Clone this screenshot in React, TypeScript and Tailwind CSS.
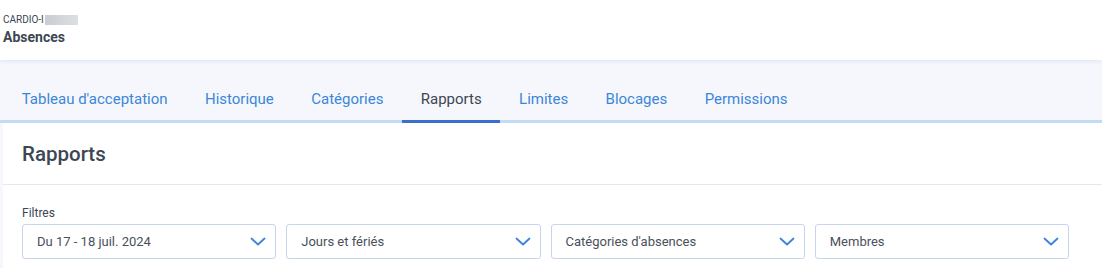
import React from 'react';

const tabs = [
    "Tableau d'acceptation",
    'Historique',
    'Catégories',
    'Rapports',
    'Limites',
    'Blocages',
    'Permissions',
];

const filters = ['Du 17 - 18 juil. 2024', 'Jours et fériés', "Catégories d'absences", 'Membres'];

const Chevron: React.FC = () => (
    <svg width="16" height="9" viewBox="0 0 16 9" fill="none" stroke="#3b82e0" strokeWidth="1.8" strokeLinecap="round" strokeLinejoin="round">
        <path d="M1.5 1.5L8 7.5L14.5 1.5" />
    </svg>
);

const App: React.FC = () => {
    return (
        <div className="w-[1102px] h-[268px] overflow-hidden bg-[#f5f7fc] font-['Roboto',sans-serif]">
            <header className="h-[60px] bg-white px-[3px] pt-[13px] relative z-10 shadow-[0_1px_4px_rgba(180,190,230,0.35)]">
                <div className="flex items-center text-[10px] leading-[13px] text-[#3d4653]">
                    CARDIO-I
                    <span className="ml-[1px] inline-block w-[33px] h-[10px] bg-gradient-to-r from-[#c9ccd2] to-[#dcdfe3]" />
                </div>
                <h1 className="text-[14px] leading-[18px] font-bold text-[#3d4653] mt-[2px]">Absences</h1>
            </header>

            <nav className="h-[63px] pl-[3px] flex items-end border-b-[3px] border-[#c3dcf3]">
                {tabs.map((t) => (
                    <div
                        key={t}
                        className={
                            t === 'Rapports'
                                ? 'px-[18.7px] pb-[11px] text-[15px] leading-[20px] text-[#3d4653] -mb-[3px] border-b-[3px] border-[#3a6fcf]'
                                : 'px-[18.7px] pb-[11px] text-[15px] leading-[20px] text-[#3c86d8]'
                        }
                    >
                        {t}
                    </div>
                ))}
            </nav>

            <main className="ml-[3px] bg-white h-full">
                <div className="h-[62px] flex items-center px-[19px] border-b border-[#dfe8f3]">
                    <h2 className="text-[20.5px] font-medium text-[#3d4653] pt-[2px]">Rapports</h2>
                </div>
                <div className="px-[19px] pt-[20px]">
                    <div className="text-[12px] leading-[16px] text-[#3d4653]">Filtres</div>
                    <div className="mt-[3px] flex gap-[10px]">
                        {filters.map((f) => (
                            <div
                                key={f}
                                className="w-[254.25px] h-[35px] flex items-center justify-between pl-[14px] pr-[9px] border border-[#c6d4ee] rounded-[3px] text-[13px] text-[#4a4f5a]"
                            >
                                <span>{f}</span>
                                <Chevron />
                            </div>
                        ))}
                    </div>
                </div>
            </main>
        </div>
    );
};

export default App;
